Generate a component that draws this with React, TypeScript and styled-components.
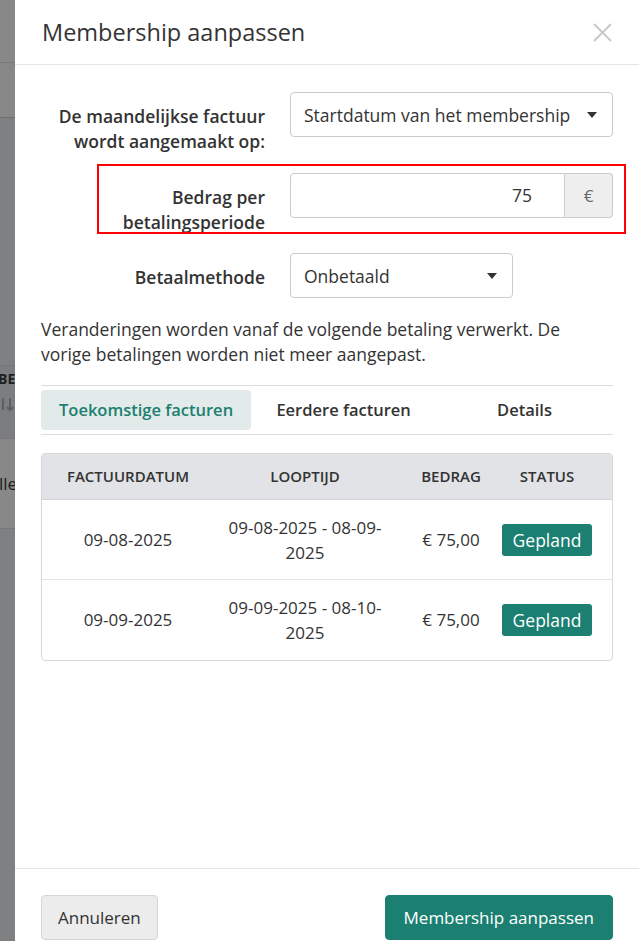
import React from 'react';
import styled, { createGlobalStyle } from 'styled-components';

const GlobalStyle = createGlobalStyle`
  html, body {
    margin: 0;
    padding: 0;
    height: 100%;
  }
  body {
    font-family: "Open Sans", "Liberation Sans", sans-serif;
    color: #333;
    background: #7f8081;
    overflow: hidden;
  }
  * {
    box-sizing: border-box;
  }
`;

const Screen = styled.div`
  display: flex;
  height: 100vh;
  overflow: hidden;
`;

// dimmed page behind the modal
const Backdrop = styled.div`
  width: 15px;
  flex: none;
  display: flex;
  flex-direction: column;
  overflow: hidden;
`;

const Band = styled.div<{ $h?: number; $bg: string; $line?: string; $top?: boolean }>`
  flex: ${(p) => (p.$h ? 'none' : '1')};
  height: ${(p) => (p.$h ? `${p.$h}px` : 'auto')};
  background: ${(p) => p.$bg};
  border-bottom: 1px solid ${(p) => p.$line || 'transparent'};
  display: flex;
  flex-direction: column;
  justify-content: ${(p) => (p.$top ? 'flex-start' : 'center')};
  padding-top: ${(p) => (p.$top ? '4px' : '0')};
  white-space: nowrap;
  color: #1f1f1f;
`;

const BandHeading = styled.span`
  font-size: 14px;
  font-weight: 700;
  margin-left: -2px;
  line-height: 18px;
`;

const BandText = styled.span`
  font-size: 17px;
  margin-left: -1px;
`;

const Modal = styled.div`
  flex: 1;
  height: 955px;
  background: #fff;
  display: flex;
  flex-direction: column;
`;

const Header = styled.div`
  display: flex;
  align-items: center;
  justify-content: space-between;
  padding: 16px 27px 16px 27px;
  border-bottom: 1px solid #e5e5e5;
`;

const Title = styled.h4`
  margin: 0;
  font-size: 23.5px;
  font-weight: 400;
  line-height: 32px;
  color: #333;
`;

const CloseButton = styled.button`
  border: 0;
  background: none;
  padding: 0;
  display: flex;
  cursor: pointer;
`;

const Body = styled.div`
  flex: 1;
  min-height: 0;
  padding: 27px 26px 0 26px;
`;

const FormRow = styled.div`
  position: relative;
  display: grid;
  grid-template-columns: 224px 1fr;
  column-gap: 25px;
  margin-bottom: 18.5px;
`;

const Label = styled.label`
  text-align: right;
  font-size: 17.5px;
  font-weight: 600;
  line-height: 25px;
  padding-top: 12px;
  color: #333;
`;

const Highlight = styled.div`
  position: absolute;
  top: -9px;
  left: 56px;
  right: -13px;
  height: 70px;
  border: 2px solid #f00;
  pointer-events: none;
`;

const Select = styled.div<{ $width?: number }>`
  height: 45px;
  width: ${(p) => (p.$width ? `${p.$width}px` : '100%')};
  border: 1px solid #ccc;
  border-radius: 4px;
  padding: 0 15px 0 13px;
  display: flex;
  align-items: center;
  justify-content: space-between;
  font-size: 17.5px;
  color: #333;
`;

const Caret = styled.span`
  width: 0;
  height: 0;
  border-left: 5px solid transparent;
  border-right: 5px solid transparent;
  border-top: 6px solid #333;
`;

const InputGroup = styled.div`
  display: flex;
  height: 45px;
`;

const AmountInput = styled.div`
  flex: 1;
  border: 1px solid #ccc;
  border-radius: 4px 0 0 4px;
  display: flex;
  align-items: center;
  justify-content: flex-end;
  padding-right: 32px;
  font-size: 17.5px;
`;

const Addon = styled.div`
  width: 48px;
  background: #eee;
  border: 1px solid #ccc;
  border-left: 0;
  border-radius: 0 4px 4px 0;
  display: flex;
  align-items: center;
  justify-content: center;
  font-size: 17px;
  color: #666;
`;

const Notice = styled.p`
  margin: 18px 0 18px;
  font-size: 17.5px;
  line-height: 25px;
  color: #333;
`;

const Tabs = styled.div`
  display: grid;
  grid-template-columns: auto 1fr 1fr;
  column-gap: 4px;
  padding: 4px 0;
  border-top: 1px solid #ddd;
  border-bottom: 1px solid #ddd;
`;

const Tab = styled.div<{ $active?: boolean }>`
  height: 40px;
  padding: 0 18px;
  display: flex;
  align-items: center;
  justify-content: center;
  font-size: 16.5px;
  font-weight: 600;
  border-radius: 4px;
  color: ${(p) => (p.$active ? '#1b7f71' : '#333')};
  background: ${(p) => (p.$active ? '#e2ebe9' : 'transparent')};
`;

const TableWrap = styled.div`
  margin-top: 18px;
  border: 1px solid #d8d8d8;
  border-radius: 4px;
  overflow: hidden;
`;

const Table = styled.table`
  width: 100%;
  border-collapse: collapse;
  table-layout: fixed;
`;

const Th = styled.th<{ $pad: string }>`
  height: 46px;
  background: #e2e3e7;
  font-size: 15px;
  font-weight: 600;
  text-transform: uppercase;
  text-align: center;
  padding: ${(p) => p.$pad};
  border-bottom: 1px solid #d5d5d5;
  color: #333;
`;

const Td = styled.td<{ $pad: string }>`
  height: 80px;
  font-size: 17px;
  line-height: 25px;
  text-align: center;
  padding: ${(p) => p.$pad};
  color: #333;
  tr:not(:last-child) > & {
    border-bottom: 1px solid #e5e5e5;
  }
`;

const Badge = styled.span`
  display: inline-block;
  height: 32px;
  line-height: 32px;
  padding: 0 11px;
  border-radius: 3px;
  background: #1b7f71;
  color: #fff;
  font-size: 17.5px;
`;

const Footer = styled.div`
  border-top: 1px solid #e5e5e5;
  padding: 26px 26px 15px 26px;
  display: flex;
  justify-content: space-between;
`;

const Button = styled.button<{ $primary?: boolean }>`
  height: 45px;
  padding: 0 ${(p) => (p.$primary ? '18px' : '16px')};
  font-family: inherit;
  font-size: 17px;
  border-radius: 4px;
  cursor: pointer;
  border: 1px solid ${(p) => (p.$primary ? '#1b7f71' : '#d5d5d5')};
  background: ${(p) => (p.$primary ? '#1b7f71' : '#ececec')};
  color: ${(p) => (p.$primary ? '#fff' : '#333')};
`;

const columns = [
  { title: 'Factuurdatum', width: 172, pad: '0 10px' },
  { title: 'Looptijd', width: 182, pad: '0 10px' },
  { title: 'Bedrag', width: 100, pad: '0 0 0 10px' },
  { title: 'Status', width: undefined, pad: '0 14px 0 0' },
];

const invoices = [
  { date: '09-08-2025', from: '09-08-2025', to: '08-09-2025', amount: '€ 75,00' },
  { date: '09-09-2025', from: '09-09-2025', to: '08-10-2025', amount: '€ 75,00' },
];

const App = () => {
  return (
    <Screen>
      <GlobalStyle />
      <Backdrop>
        <Band $h={63} $bg="#888" $line="#797979" />
        <Band $h={55} $bg="#878787" $line="#6f7071" />
        <Band $h={248} $bg="#7f8081" $line="#767778" />
        <Band $h={73} $bg="#7c7d7e" $line="#777" $top>
          <BandHeading>BET</BandHeading>
          <svg width="14" height="16" viewBox="0 0 14 16" style={{ marginTop: 8 }}>
            <path d="M3 2v12M7 11l3 3 3-3M10 14V2" stroke="#5e5f60" strokeWidth="2" fill="none" />
          </svg>
        </Band>
        <Band $h={90} $bg="#888" $line="#777">
          <BandText>lle</BandText>
        </Band>
        <Band $bg="#7f8081" />
      </Backdrop>

      <Modal>
        <Header>
          <Title>Membership aanpassen</Title>
          <CloseButton aria-label="Sluiten">
            <svg width="19" height="19" viewBox="0 0 19 19">
              <path d="M1 1l17 17M18 1L1 18" stroke="#c9c9c9" strokeWidth="2" />
            </svg>
          </CloseButton>
        </Header>

        <Body>
          <FormRow>
            <Label>
              De maandelijkse factuur
              <br />
              wordt aangemaakt op:
            </Label>
            <Select>
              Startdatum van het membership
              <Caret />
            </Select>
          </FormRow>

          <FormRow>
            <Highlight />
            <Label>
              Bedrag per
              <br />
              betalingsperiode
            </Label>
            <InputGroup>
              <AmountInput>75</AmountInput>
              <Addon>€</Addon>
            </InputGroup>
          </FormRow>

          <FormRow>
            <Label>Betaalmethode</Label>
            <Select $width={223}>
              Onbetaald
              <Caret />
            </Select>
          </FormRow>

          <Notice>
            Veranderingen worden vanaf de volgende betaling verwerkt. De
            <br />
            vorige betalingen worden niet meer aangepast.
          </Notice>

          <Tabs>
            <Tab $active>Toekomstige facturen</Tab>
            <Tab>Eerdere facturen</Tab>
            <Tab>Details</Tab>
          </Tabs>

          <TableWrap>
            <Table>
              <colgroup>
                {columns.map((c) => (
                  <col key={c.title} style={c.width ? { width: c.width } : undefined} />
                ))}
              </colgroup>
              <thead>
                <tr>
                  {columns.map((c) => (
                    <Th key={c.title} $pad={c.pad}>
                      {c.title}
                    </Th>
                  ))}
                </tr>
              </thead>
              <tbody>
                {invoices.map((inv) => (
                  <tr key={inv.date}>
                    <Td $pad={columns[0].pad}>{inv.date}</Td>
                    <Td $pad={columns[1].pad}>
                      {inv.from} - {inv.to}
                    </Td>
                    <Td $pad={columns[2].pad}>{inv.amount}</Td>
                    <Td $pad={columns[3].pad}>
                      <Badge>Gepland</Badge>
                    </Td>
                  </tr>
                ))}
              </tbody>
            </Table>
          </TableWrap>
        </Body>

        <Footer>
          <Button>Annuleren</Button>
          <Button $primary>Membership aanpassen</Button>
        </Footer>
      </Modal>
    </Screen>
  );
};

export default App;
